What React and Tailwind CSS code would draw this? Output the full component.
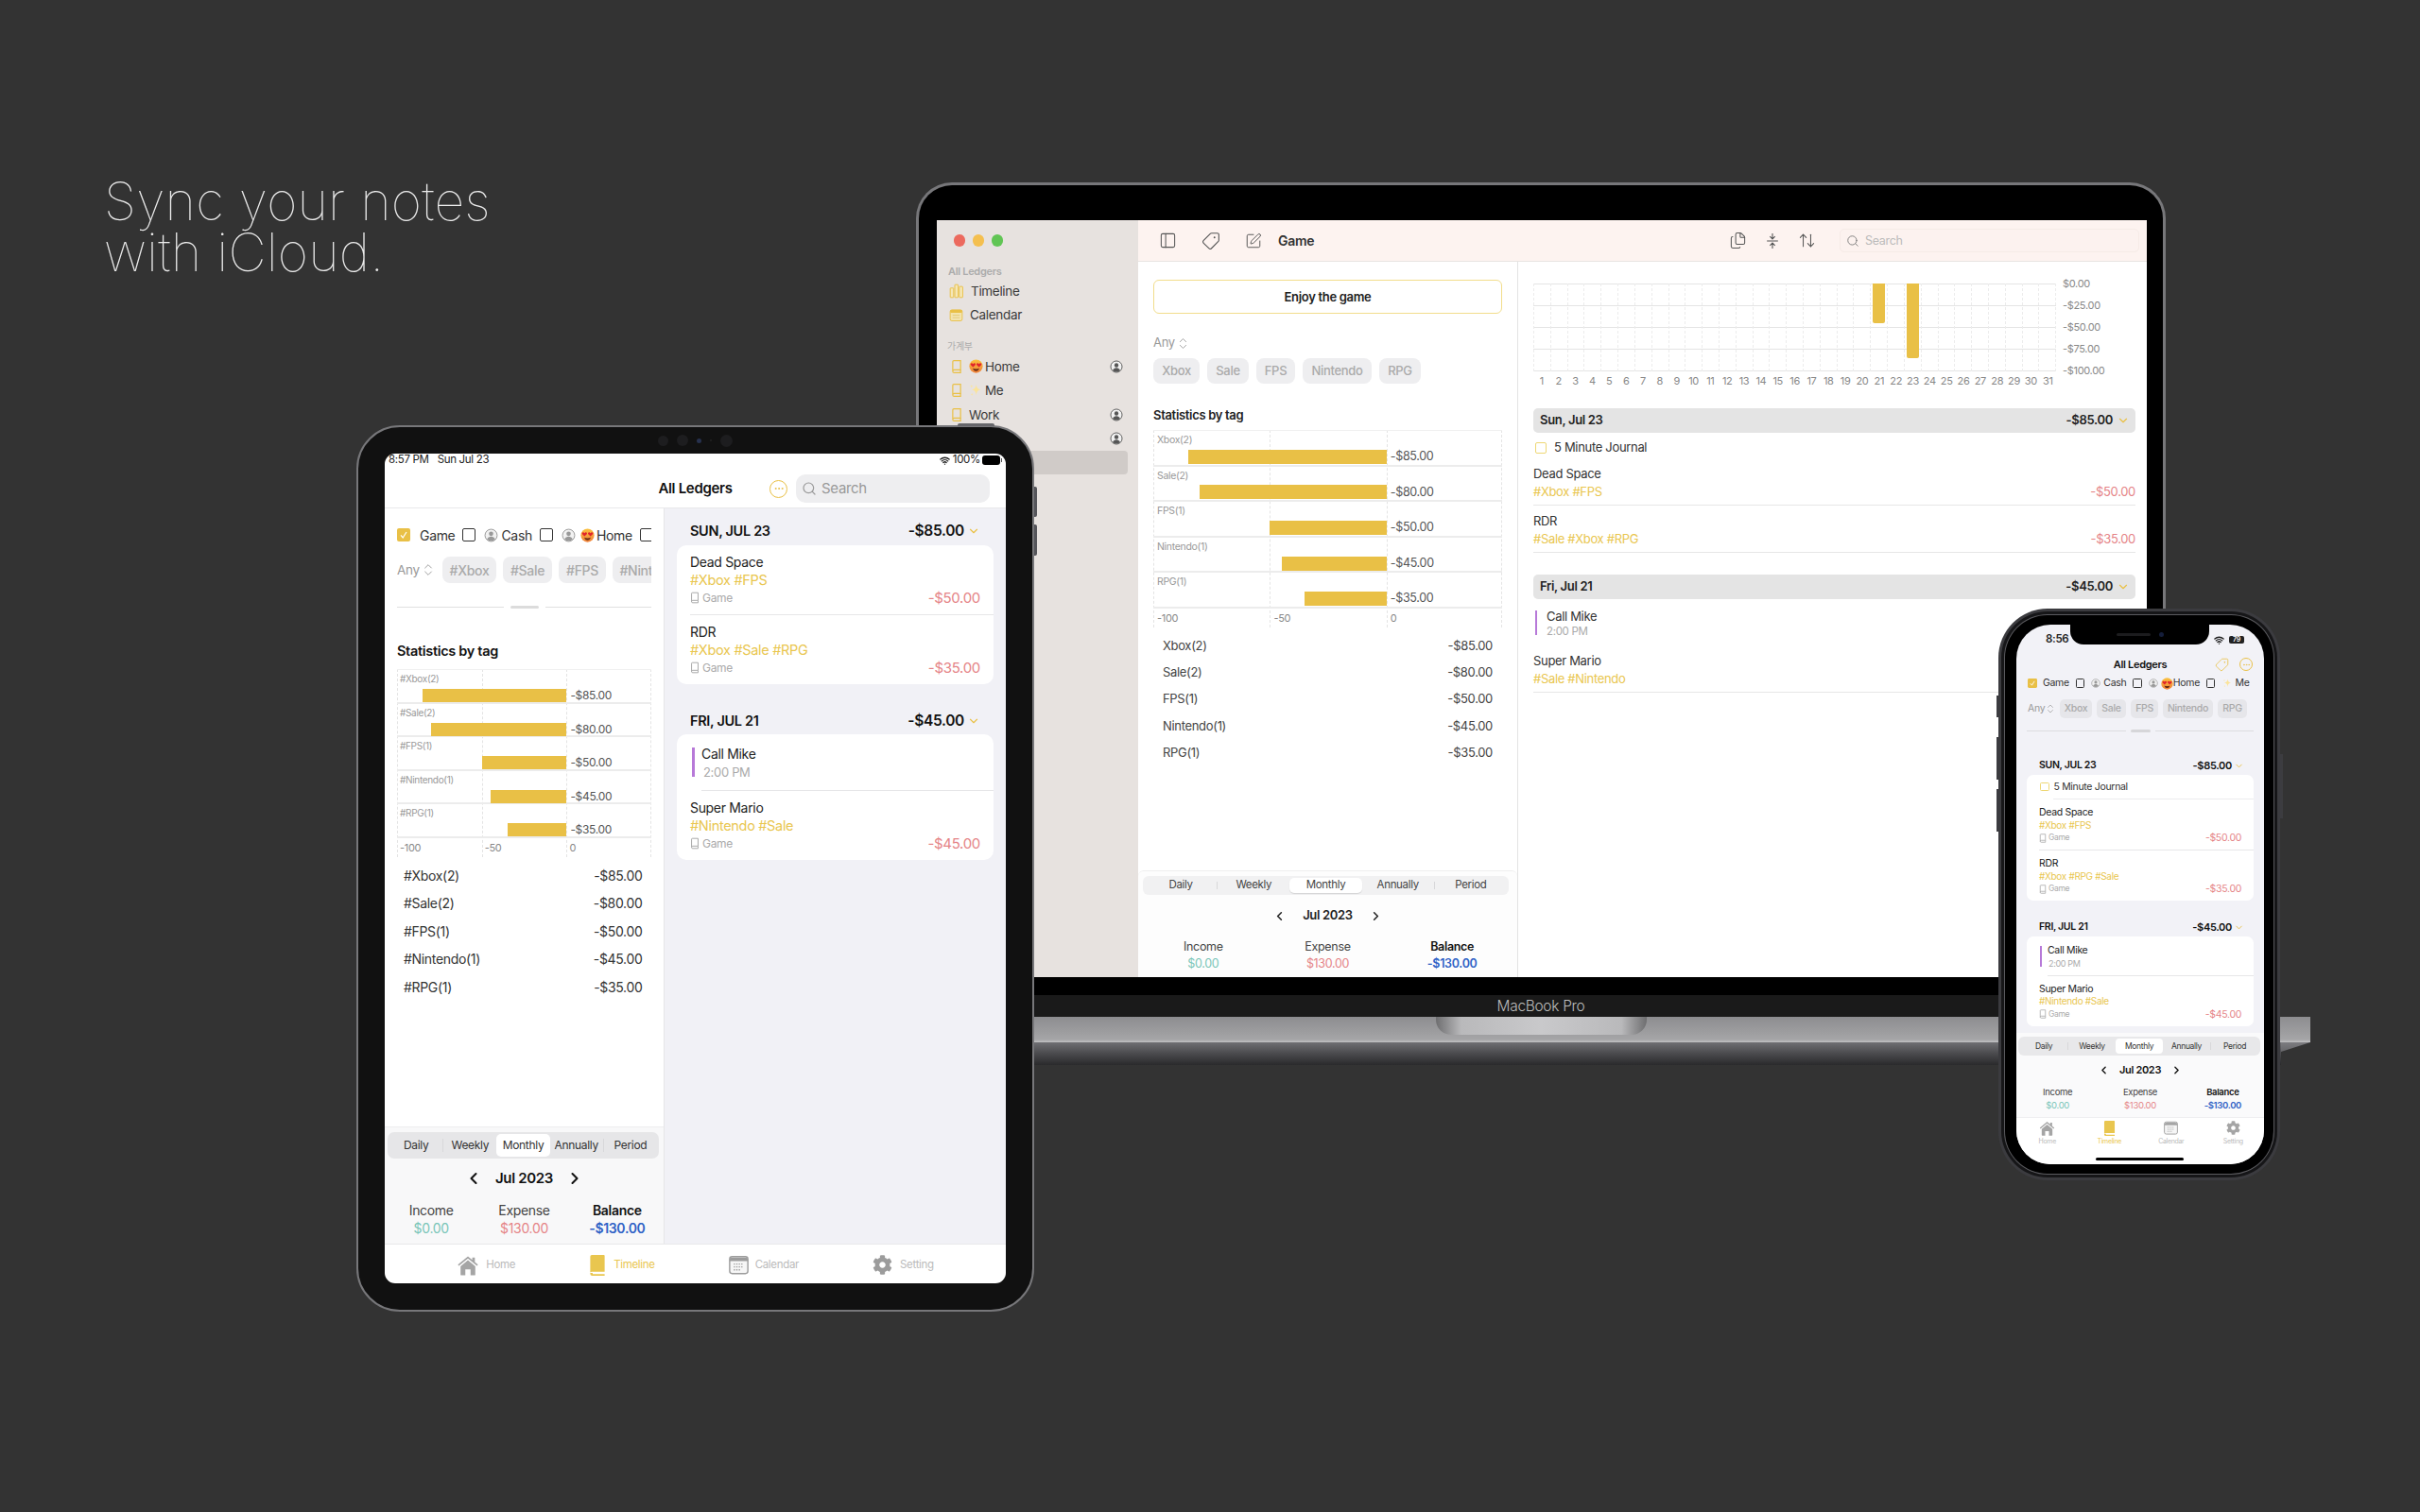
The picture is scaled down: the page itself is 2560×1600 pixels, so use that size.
import React from "react";
import {
  ArrowUpDown,
  ChevronDown,
  ChevronLeft,
  ChevronRight,
  ChevronsUpDown,
  Ellipsis,
  Files,
  PanelLeft,
  Search,
  SquarePen,
  Tag,
  Wifi,
} from "lucide-react";
import { FaCog } from "react-icons/fa";

const TAG_ROWS = [
  { name: "Xbox", count: 2, value: 85 },
  { name: "Sale", count: 2, value: 80 },
  { name: "FPS", count: 1, value: 50 },
  { name: "Nintendo", count: 1, value: 45 },
  { name: "RPG", count: 1, value: 35 },
];
const PERIODS = ["Daily", "Weekly", "Monthly", "Annually", "Period"];

// small drawings ----------------------------------------------------------

const BookIcon = ({ className }) => (
  <svg viewBox="0 0 16 20" fill="none" stroke="currentColor" strokeWidth="1.6" className={className}>
    <path d="M4 1.5h9.5v13H4.5A2 2 0 0 0 2.5 16.5V3A1.5 1.5 0 0 1 4 1.5z" />
    <path d="M2.5 16.5a2 2 0 0 0 2 2h9v-4" />
  </svg>
);

const BooksIcon = ({ className }) => (
  <svg viewBox="0 0 20 20" fill="#f5e7b8" stroke="currentColor" strokeWidth="1.2" className={className}>
    <rect x="1.5" y="6" width="4.5" height="12.5" rx="0.6" />
    <rect x="7.5" y="1.5" width="4.5" height="17" rx="0.6" />
    <rect x="13.5" y="4" width="4.5" height="14.5" rx="0.6" />
  </svg>
);

const SmallCalendar = ({ className }) => (
  <svg viewBox="0 0 20 20" className={className}>
    <rect x="1.5" y="2.5" width="17" height="15.5" rx="2.5" fill="#f3e4ae" stroke="#e9c046" strokeWidth="1.2" />
    <rect x="1.5" y="2.5" width="17" height="4" rx="1.5" fill="#e9c046" />
    <path d="M5 10h10M5 13.5h10" stroke="#e2c878" strokeWidth="1.2" />
  </svg>
);

const FoldArrows = ({ className }) => (
  <svg viewBox="0 0 20 20" fill="none" stroke="currentColor" strokeWidth="1.2" className={className}>
    <path d="M10 1v6.500M7 4.700l3 3 3-3M3.500 10h13M10 19v-6.500M7 15.300l3-3 3 3" />
  </svg>
);

const UserRing = ({ className }) => (
  <svg viewBox="0 0 20 20" className={className}>
    <circle cx="10" cy="10" r="8.6" fill="#f2f2f2" stroke="currentColor" strokeWidth="1.3" />
    <circle cx="10" cy="7.8" r="3.1" fill="currentColor" />
    <path d="M4.4 15.6c1-2.600 3.200-3.800 5.600-3.800s4.600 1.200 5.600 3.800A8 8 0 0 1 10 18a8 8 0 0 1-5.600-2.400z" fill="currentColor" />
  </svg>
);

const HeartEyes = ({ className }) => (
  <svg viewBox="0 0 20 20" className={className}>
    <defs>
      <linearGradient id="heartFace" x1="0" y1="0" x2="0" y2="1">
        <stop offset="0" stopColor="#fbc23e" />
        <stop offset="1" stopColor="#f0813a" />
      </linearGradient>
    </defs>
    <circle cx="10" cy="10" r="9.5" fill="url(#heartFace)" />
    <path d="M5.800 11.400 2.600 8.300C1.400 6.800 3.400 4.700 5 6.200l.8.800.800-.800c1.600-1.500 3.600.6 2.400 2.100z" fill="#e0242c" />
    <path d="M14.200 11.400 11 8.300c-1.200-1.500.8-3.600 2.400-2.100l.8.800.800-.800c1.600-1.500 3.600.6 2.400 2.100z" fill="#e0242c" />
    <path d="M5.500 13c1 .6 2.500 1 4.500 1s3.500-.4 4.500-1c-.6 2.400-2.300 4-4.500 4s-3.900-1.600-4.500-4z" fill="#6b2b12" />
  </svg>
);

const Sparkles = ({ className }) => (
  <svg viewBox="0 0 20 20" fill="#fbe49a" className={className}>
    <path d="M11 1c.6 5 2 7 7 8-5 1-6.400 3-7 9-.6-6-2-8-7-9 5-1 6.400-3 7-8z" />
    <path d="M4 1.500c.2 1.700.8 2.300 2.300 2.500C4.800 4.200 4.200 4.800 4 6.500 3.800 4.800 3.200 4.200 1.700 4 3.200 3.800 3.800 3.200 4 1.500z" />
    <path d="M4.500 14c.2 1.400.7 2 2 2.200-1.300.2-1.800.8-2 2.300-.2-1.500-.7-2.100-2-2.300 1.300-.2 1.800-.8 2-2.200z" />
  </svg>
);

const CheckedBox = ({ className }) => (
  <svg viewBox="0 0 14 14" className={className}>
    <rect width="14" height="14" rx="2" fill="#e9c046" />
    <path d="M4 7.300 6.200 10 10 4" fill="none" stroke="#fff" strokeWidth="1.200" />
  </svg>
);

const TabHome = ({ className }) => (
  <svg viewBox="0 0 24 24" fill="currentColor" className={className}>
    <path d="M12 1.500 17 5.600V3h3v5.100l3.600 3-1.200 1.500L12 4.200 1.600 12.600.4 11.100z" />
    <path d="M3.500 13 12 6.100 20.500 13v9.500a1 1 0 0 1-1 1h-4.500v-7h-6v7H4.500a1 1 0 0 1-1-1z" />
  </svg>
);

const TabBook = ({ className }) => (
  <svg viewBox="0 0 20 26" fill="currentColor" className={className}>
    <path d="M3 0h15a1 1 0 0 1 1 1v20H3.500A2.500 2.500 0 0 0 1 22V2a2 2 0 0 1 2-2z" />
    <path d="M1 23.500A2.500 2.500 0 0 0 3.500 26H19v-2H4v-1.500H1z" />
  </svg>
);

const TabCalendar = ({ className }) => (
  <svg viewBox="0 0 24 24" className={className}>
    <rect x="1" y="2" width="22" height="20.500" rx="3" fill="#f6f6f6" stroke="currentColor" strokeWidth="1.600" />
    <path d="M1 6a3 3 0 0 1 3-3h16a3 3 0 0 1 3 3v1.500H1z" fill="currentColor" />
    <path d="M6 11h12M6 14.500h12M6 18h8" stroke="currentColor" strokeWidth="1.500" strokeDasharray="1.500 1.500" />
  </svg>
);

// shared pieces -----------------------------------------------------------

function TagChart({ prefix = "", scale, rowCls, labelCls, barCls, valueCls, axisCls }) {
  const step = 50 * scale;
  return (
    <div className="relative">
      <div className="absolute inset-0 flex">
        <div className="border-l border-dashed border-[#e4e4e4]" style={{ width: step }} />
        <div className="border-l border-dashed border-[#e4e4e4]" style={{ width: step }} />
        <div className="flex-1 border-x border-dashed border-[#e4e4e4]" />
      </div>
      <div className="relative border-t border-[#f0f0f0]">
        {TAG_ROWS.map((row) => (
          <div key={row.name} className={`${rowCls} border-b-2 border-[#ececec]`}>
            <div className={labelCls}>{`${prefix}${row.name}(${row.count})`}</div>
            <div className="flex items-center">
              <div style={{ width: (100 - row.value) * scale }} />
              <div className={`${barCls} bg-[#e9c046]`} style={{ width: row.value * scale }} />
              <span className={valueCls}>{`-$${row.value}.00`}</span>
            </div>
          </div>
        ))}
        <div className={`${axisCls} flex items-center`}>
          <span style={{ width: step }}>-100</span>
          <span style={{ width: step }}>-50</span>
          <span>0</span>
        </div>
      </div>
    </div>
  );
}

function TagList({ prefix = "", boxCls, rowCls }) {
  return (
    <div className={boxCls}>
      {TAG_ROWS.map((row) => (
        <div key={row.name} className={`${rowCls} flex items-center justify-between`}>
          <span>{`${prefix}${row.name}(${row.count})`}</span>
          <span>{`-$${row.value}.00`}</span>
        </div>
      ))}
    </div>
  );
}

function Segmented({ barCls, itemCls, selCls }) {
  return (
    <div className={`${barCls} flex items-center p-[2px]`}>
      {PERIODS.map((p, i) => (
        <React.Fragment key={p}>
          <div
            className={`flex h-full flex-1 items-center justify-center ${itemCls} ${
              p === "Monthly" ? selCls : ""
            }`}
          >
            {p}
          </div>
          {(i === 0 || i === 3) && <span className="h-[55%] w-px bg-[#d8d8da]" />}
        </React.Fragment>
      ))}
    </div>
  );
}

function Totals({ gridCls, labelCls, valueCls }) {
  return (
    <div className={`grid grid-cols-3 text-center ${gridCls}`}>
      <div>
        <div className={`${labelCls} text-[#444]`}>Income</div>
        <div className={`${valueCls} text-[#79c5b8]`}>$0.00</div>
      </div>
      <div>
        <div className={`${labelCls} text-[#444]`}>Expense</div>
        <div className={`${valueCls} text-[#e58487]`}>$130.00</div>
      </div>
      <div>
        <div className={`${labelCls} font-semibold text-[#111]`}>Balance</div>
        <div className={`${valueCls} font-semibold text-[#2f62c6]`}>-$130.00</div>
      </div>
    </div>
  );
}

function Entry({ t, title, tags, amount, last }) {
  return (
    <div className={`${t.entryRoot} ${last ? "" : "border-b border-[#e6e6e8]"}`}>
      <div className={`${t.title} text-[#222]`}>{title}</div>
      <div className={`${t.tags} text-[#e9c64f]`}>{tags}</div>
      <div className="flex items-center justify-between">
        <div className="flex items-center text-[#aaa]">
          <BookIcon className={t.bookIcon} />
          <span className={t.meta}>Game</span>
        </div>
        <span className={`${t.amount} text-[#e58487]`}>{amount}</span>
      </div>
    </div>
  );
}

function DayHeader({ t, date, total }) {
  return (
    <div className={`${t.dayHead} flex items-center justify-between`}>
      <span className={`${t.date} font-semibold text-[#111]`}>{date}</span>
      <span className="flex items-center">
        <span className={`${t.total} font-semibold text-[#111]`}>{total}</span>
        <ChevronDown className={`${t.chev} text-[#e9c046]`} strokeWidth={2} />
      </span>
    </div>
  );
}

function FridayCard({ t }) {
  return (
    <div className={`${t.card} bg-white`}>
      <div className={t.callRoot}>
        <div className={`${t.callBar} bg-[#b779d8]`} />
        <div className={`${t.callBody} flex-1 border-b border-[#e6e6e8]`}>
          <div className={`${t.title} text-[#222]`}>Call Mike</div>
          <div className={`${t.time} text-[#aaa]`}>2:00 PM</div>
        </div>
      </div>
      <Entry t={t} title="Super Mario" tags="#Nintendo #Sale" amount="-$45.00" last />
    </div>
  );
}

// macbook ------------------------------------------------------------------

function SidebarRow({ children, right, selected }) {
  return (
    <div
      className={`mr-[11px] flex h-[25.4px] items-center rounded-[4px] pr-[5px] pl-[15px] text-[13.5px] text-[#3a3a3a] ${
        selected ? "bg-[#d0cbc8]" : ""
      }`}
    >
      {children}
      {right && <UserRing className="ml-auto h-[14px] w-[14px] text-[#555]" />}
    </div>
  );
}

function MacSidebar() {
  const book = <BookIcon className="mr-[7px] h-[16px] w-[12px] text-[#e9c046]" />;
  return (
    <div className="flex w-[213px] shrink-0 flex-col bg-[#e7e2df] pt-[15px]">
      <div className="flex gap-[7.5px] pl-[17.5px]">
        <span className="h-[12.5px] w-[12.5px] rounded-full bg-[#ec6a5e]" />
        <span className="h-[12.5px] w-[12.5px] rounded-full bg-[#f4bf4f]" />
        <span className="h-[12.5px] w-[12.5px] rounded-full bg-[#61c554]" />
      </div>
      <div className="mt-[19px] pl-[12px] text-[11px] leading-[14px] font-semibold text-[#acacac]">All Ledgers</div>
      <div className="mt-[2px]">
        <SidebarRow>
          <BooksIcon className="mr-[7px] ml-[-2px] h-[16px] w-[16px] text-[#e9c046]" />
          Timeline
        </SidebarRow>
        <SidebarRow>
          <SmallCalendar className="mr-[7px] ml-[-2px] h-[15px] w-[15px]" />
          Calendar
        </SidebarRow>
      </div>
      <div className="mt-[13px] pl-[11px] text-[10px] leading-[14px] text-[#acacac]">가계부</div>
      <div className="mt-[2px]">
        <SidebarRow right>
          {book}
          <HeartEyes className="mr-[2px] h-[15px] w-[15px]" />
          Home
        </SidebarRow>
        <SidebarRow>
          {book}
          <Sparkles className="mr-[3px] h-[14px] w-[14px]" />
          Me
        </SidebarRow>
        <SidebarRow right>
          {book}
          Work
        </SidebarRow>
        <SidebarRow right />
        <SidebarRow selected />
      </div>
    </div>
  );
}

function MacMiddle() {
  return (
    <div className="flex w-[402px] shrink-0 flex-col border-r border-[#e3e3e3]">
      <div className="px-[16px] pt-[19px]">
        <div className="flex h-[36px] items-center justify-center rounded-[6px] border border-[#f2dd8b] pt-[1px] text-[13px] font-semibold text-[#222]">
          Enjoy the game
        </div>
        <div className="mt-[23px] flex h-[16px] items-center text-[13px] text-[#999]">
          Any
          <ChevronsUpDown className="ml-[1px] h-[15px] w-[15px]" strokeWidth={1.4} />
        </div>
        <div className="mt-[8px] flex gap-[8px]">
          <span className="flex h-[27px] w-[49px] items-center justify-center rounded-[8px] bg-[#eeeef0] text-[13px] font-medium text-[#aaa]">Xbox</span>
          <span className="flex h-[27px] w-[44px] items-center justify-center rounded-[8px] bg-[#eeeef0] text-[13px] font-medium text-[#aaa]">Sale</span>
          <span className="flex h-[27px] w-[41px] items-center justify-center rounded-[8px] bg-[#eeeef0] text-[13px] font-medium text-[#aaa]">FPS</span>
          <span className="flex h-[27px] w-[73px] items-center justify-center rounded-[8px] bg-[#eeeef0] text-[13px] font-medium text-[#aaa]">Nintendo</span>
          <span className="flex h-[27px] w-[44px] items-center justify-center rounded-[8px] bg-[#eeeef0] text-[13px] font-medium text-[#aaa]">RPG</span>
        </div>
        <div className="mt-[25px] text-[13px] leading-[16px] font-semibold text-[#222]">Statistics by tag</div>
        <div className="mt-[8px]">
          <TagChart
            scale={2.468}
            rowCls="h-[37.6px] pt-[3px]"
            labelCls="mb-[1px] pl-[4px] text-[10.5px] leading-[14px] text-[#999]"
            barCls="h-[15px]"
            valueCls="ml-[4px] text-[12.5px] text-[#555]"
            axisCls="h-[20px] pl-[4px] text-[11px] text-[#888]"
          />
        </div>
        <TagList boxCls="mt-[5.5px] pr-[10px] pl-[10px]" rowCls="h-[28.25px] text-[13px] text-[#444]" />
      </div>
      <div className="mt-auto h-[113px] rounded-t-[6px] border-t border-[#eee] bg-[#fdfdfd] pt-[5px]">
        <div className="mr-[9px] ml-[5px]">
          <Segmented
            barCls="h-[20px] rounded-[6px] bg-[#f1f1f2]"
            itemCls="text-[11.5px] text-[#444]"
            selCls="rounded-[5px] bg-white shadow-[0_1px_1px_rgba(0,0,0,0.12)]"
          />
        </div>
        <div className="mt-[12px] flex h-[20px] items-center justify-center">
          <ChevronLeft className="h-[15px] w-[15px] text-[#222]" strokeWidth={2.5} />
          <span className="mx-[17px] text-[13px] font-semibold text-[#222]">Jul 2023</span>
          <ChevronRight className="h-[15px] w-[15px] text-[#222]" strokeWidth={2.5} />
        </div>
        <div className="mt-[15px]">
          <Totals gridCls="px-[3px]" labelCls="text-[12.5px] leading-[16px]" valueCls="mt-[2px] text-[12.5px] leading-[16px]" />
        </div>
      </div>
    </div>
  );
}

function MacDayChart() {
  const days = Array.from({ length: 31 }, (_, i) => i + 1);
  const heights = { 21: 42, 23: 79 };
  const yLabels = ["$0.00", "-$25.00", "-$50.00", "-$75.00", "-$100.00"];
  return (
    <div className="flex">
      <div className="w-[553px] shrink-0">
        <div className="relative h-[93px]">
          <div className="absolute inset-0 flex flex-col justify-between">
            {yLabels.map((l) => (
              <div key={l} className="h-px bg-[#e4e4e4]" />
            ))}
          </div>
          <div className="relative flex h-full">
            {days.map((d) => (
              <div key={d} className="flex flex-1 justify-center border-r border-dashed border-[#ececec] first:border-l">
                {heights[d] && <div className="w-[13px] rounded-b-[2px] bg-[#e9c046]" style={{ height: heights[d] }} />}
              </div>
            ))}
          </div>
        </div>
        <div className="mt-[3px] flex text-[11px] leading-[14px] text-[#888]">
          {days.map((d) => (
            <span key={d} className="flex-1 text-center">
              {d}
            </span>
          ))}
        </div>
      </div>
      <div className="-mt-[4px] ml-[7px] flex h-[101px] flex-col justify-between text-[11px] leading-[9px] text-[#888]">
        {yLabels.map((l) => (
          <span key={l}>{l}</span>
        ))}
      </div>
    </div>
  );
}

function MacDayBar({ date, total }) {
  return (
    <div className="flex h-[26px] items-center justify-between rounded-[5px] bg-[#e4e4e4] pr-[6px] pl-[7px]">
      <span className="text-[13px] font-semibold text-[#222]">{date}</span>
      <span className="flex items-center">
        <span className="text-[13px] font-semibold text-[#222]">{total}</span>
        <ChevronDown className="ml-[4px] h-[14px] w-[14px] text-[#e9c046]" />
      </span>
    </div>
  );
}

function MacEntry({ title, tags, amount, topCls }) {
  return (
    <div className={`${topCls} border-b border-[#e6e6e6] pb-[5px]`}>
      <div className="text-[13px] leading-[18px] text-[#333]">{title}</div>
      <div className="mt-[1px] flex justify-between text-[13px] leading-[18px]">
        <span className="text-[#e9c64f]">{tags}</span>
        {amount && <span className="text-[#e58487]">{amount}</span>}
      </div>
    </div>
  );
}

function MacRight() {
  return (
    <div className="flex-1 pt-[23px] pr-[12px] pl-[16px]">
      <MacDayChart />
      <div className="mt-[22px]">
        <MacDayBar date="Sun, Jul 23" total="-$85.00" />
      </div>
      <div className="mt-[8px] flex h-[16px] items-center pl-[2px] text-[13px] text-[#333]">
        <span className="mr-[8px] h-[12px] w-[12px] rounded-[2px] border border-[#eed774]" />5 Minute Journal
      </div>
      <MacEntry title="Dead Space" tags="#Xbox #FPS" amount="-$50.00" topCls="mt-[10px]" />
      <MacEntry title="RDR" tags="#Sale #Xbox #RPG" amount="-$35.00" topCls="pt-[7px]" />
      <div className="mt-[23px]">
        <MacDayBar date="Fri, Jul 21" total="-$45.00" />
      </div>
      <div className="mt-[10px] flex">
        <div className="mt-[2px] ml-[2px] h-[26px] w-[2px] bg-[#b779d8]" />
        <div className="ml-[10px]">
          <div className="text-[13px] leading-[16px] text-[#333]">Call Mike</div>
          <div className="text-[11.5px] leading-[16px] text-[#aaa]">2:00 PM</div>
        </div>
      </div>
      <MacEntry title="Super Mario" tags="#Sale #Nintendo" topCls="mt-[14px]" />
    </div>
  );
}

function MacBook() {
  return (
    <div className="absolute top-[193px] left-[816px] w-[1628px]">
      <div className="mx-auto h-[860px] w-[1322px] overflow-hidden rounded-t-[38px] border-x-[3px] border-t-[3px] border-[#77777a] bg-black pt-[37px] pr-[17px] pl-[19px]">
        <div className="flex h-[801px] w-[1280px] bg-white">
          <MacSidebar />
          <div className="flex flex-1 flex-col">
            <div className="flex h-[44px] shrink-0 items-center border-b border-[#e8e4e2] bg-[#fdf3f0] pr-[8px] pl-[22px] text-[#555]">
              <PanelLeft className="h-[19px] w-[19px]" strokeWidth={1.3} />
              <Tag className="ml-[26px] h-[20px] w-[20px] rotate-90" strokeWidth={1.3} />
              <SquarePen className="ml-[26px] h-[18px] w-[18px]" strokeWidth={1.3} />
              <span className="mb-[1px] ml-[17px] text-[14px] font-semibold text-[#333]">Game</span>
              <Files className="ml-auto h-[19px] w-[19px]" strokeWidth={1.3} />
              <FoldArrows className="ml-[18px] h-[18px] w-[18px]" />
              <ArrowUpDown className="ml-[18px] h-[19px] w-[19px]" strokeWidth={1.3} />
              <div className="ml-[25px] flex h-[25px] w-[317px] items-center rounded-[5px] border border-[#f6ebe7] bg-[#fcf2ef] pt-[1px] pl-[6px] text-[12.5px] text-[#bbb]">
                <Search className="mr-[6px] h-[14px] w-[14px] text-[#777]" strokeWidth={1.5} />
                Search
              </div>
            </div>
            <div className="flex min-h-0 flex-1">
              <MacMiddle />
              <MacRight />
            </div>
          </div>
        </div>
      </div>
      <div className="relative mx-auto flex h-[23px] w-[1322px] items-center justify-center bg-[#1a1a1a] text-[15.5px] font-light text-[#bdbdbd]">
        MacBook Pro
      </div>
      <div className="relative h-[27px] bg-[linear-gradient(180deg,#8d8d90_0%,#9d9d9f_60%,#a6a6a8_90%,#c4c4c6_100%)]">
        <div className="absolute top-0 left-[703px] h-[19px] w-[223px] rounded-b-[16px] bg-[linear-gradient(90deg,#6e6e70_0%,#b9b9bb_12%,#c9c9cb_50%,#b9b9bb_88%,#6e6e70_100%)]" />
      </div>
      <div className="flex h-[24px]">
        <div className="flex-1 bg-[linear-gradient(180deg,#6f6f73_0%,#4a4a4d_50%,#2a2a2c_100%)]" />
        <div className="h-[10px] w-[31px] bg-[linear-gradient(180deg,#7c7c80,#666669)] [clip-path:polygon(0_0,100%_0,0_100%)]" />
      </div>
    </div>
  );
}

// ipad ---------------------------------------------------------------------

const ipadType = {
  dayHead: "h-[20px] pr-[14px] pl-[14px]",
  date: "text-[14.5px]",
  total: "text-[15.5px]",
  chev: "ml-[3px] h-[14px] w-[14px]",
  card: "rounded-[10px]",
  entryRoot: "ml-[14px] pt-[7.5px] pr-[14px] pb-[7.5px]",
  title: "text-[14px] leading-[19px]",
  tags: "text-[14.5px] leading-[19px]",
  bookIcon: "mr-[3px] h-[13px] w-[10px]",
  meta: "text-[12px] leading-[20px]",
  amount: "text-[15px] leading-[20px]",
  callRoot: "flex pl-[16px]",
  callBar: "mt-[14px] h-[31px] w-[2.5px]",
  callBody: "ml-[7.5px] pt-[11px] pb-[9px]",
  time: "pl-[2px] text-[13px] leading-[20px]",
};

const ipadCheckbox = <span className="h-[14px] w-[14px] shrink-0 rounded-[2px] border-[1.5px] border-[#333]" />;

function IpadLeft() {
  return (
    <div className="flex w-[296px] shrink-0 flex-col border-r border-[#e6e6e8]">
      <div className="px-[13px] pt-[20px]">
        <div className="flex h-[16px] items-center overflow-hidden text-[14px] whitespace-nowrap text-[#333]">
          <CheckedBox className="h-[14px] w-[14px] shrink-0" />
          <span className="mr-[8px] ml-[10px]">Game</span>
          {ipadCheckbox}
          <UserRing className="mr-[3px] ml-[9px] h-[15px] w-[15px] shrink-0 text-[#999]" />
          <span className="mr-[8px]">Cash</span>
          {ipadCheckbox}
          <UserRing className="ml-[9px] h-[15px] w-[15px] shrink-0 text-[#999]" />
          <HeartEyes className="mr-[2px] ml-[5px] h-[15px] w-[15px] shrink-0" />
          <span className="mr-[8px]">Home</span>
          {ipadCheckbox}
        </div>
        <div className="mt-[15px] flex items-center overflow-hidden whitespace-nowrap">
          <span className="flex w-[48px] shrink-0 items-center text-[13.5px] text-[#999]">
            Any
            <ChevronsUpDown className="ml-[1px] h-[16px] w-[16px]" strokeWidth={1.4} />
          </span>
          <span className="flex h-[28px] w-[57px] shrink-0 items-center justify-center rounded-[8px] bg-[#eeeef0] text-[14px] font-medium text-[#aaa]">#Xbox</span>
          <span className="ml-[7px] flex h-[28px] w-[52px] shrink-0 items-center justify-center rounded-[8px] bg-[#eeeef0] text-[14px] font-medium text-[#aaa]">#Sale</span>
          <span className="ml-[7px] flex h-[28px] w-[50px] shrink-0 items-center justify-center rounded-[8px] bg-[#eeeef0] text-[14px] font-medium text-[#aaa]">#FPS</span>
          <span className="ml-[7px] flex h-[28px] w-[82px] shrink-0 items-center justify-center rounded-[8px] bg-[#eeeef0] text-[14px] font-medium text-[#aaa]">#Nintendo</span>
        </div>
        <div className="mt-[24px] flex h-[3px] items-center gap-[7px]">
          <span className="h-[1px] flex-1 bg-[#e0e0e0]" />
          <span className="h-[3px] w-[30px] rounded-full bg-[#dcdcdc]" />
          <span className="h-[1px] flex-1 bg-[#e0e0e0]" />
        </div>
        <div className="mt-[36px] text-[14.5px] leading-[18px] font-semibold text-[#111]">Statistics by tag</div>
        <div className="mt-[10px]">
          <TagChart
            prefix="#"
            scale={1.794}
            rowCls="h-[35.6px] pt-[3px]"
            labelCls="mb-[2px] pl-[3px] text-[10px] leading-[13px] text-[#999]"
            barCls="h-[14px]"
            valueCls="ml-[4px] text-[12px] text-[#555]"
            axisCls="h-[20px] pl-[3px] text-[11px] text-[#888]"
          />
        </div>
        <TagList prefix="#" boxCls="mt-[4.5px] pr-[9.5px] pl-[7px]" rowCls="h-[29.5px] text-[14px] text-[#333]" />
      </div>
      <div className="mt-auto h-[124px] border-t border-[#eeeeef] bg-[#f8f8f9] pt-[5px]">
        <div className="mr-[5px] ml-[3px]">
          <Segmented
            barCls="h-[28px] rounded-[7px] bg-[#e6e6e8]"
            itemCls="text-[12px] text-[#333]"
            selCls="rounded-[5px] bg-white"
          />
        </div>
        <div className="mt-[10px] flex h-[22px] items-center justify-center">
          <ChevronLeft className="h-[20px] w-[20px] text-[#111]" strokeWidth={2.5} />
          <span className="mx-[13px] text-[15px] font-semibold text-[#111]">Jul 2023</span>
          <ChevronRight className="h-[20px] w-[20px] text-[#111]" strokeWidth={2.5} />
        </div>
        <div className="mt-[14px]">
          <Totals gridCls="" labelCls="text-[14px] leading-[18px]" valueCls="mt-[1px] text-[14px] leading-[18px]" />
        </div>
      </div>
    </div>
  );
}

function IpadRight() {
  const t = ipadType;
  return (
    <div className="flex-1 bg-[#f1f1f6] px-[13px] pt-[14px]">
      <DayHeader t={t} date="SUN, JUL 23" total="-$85.00" />
      <div className={`${t.card} mt-[5px] bg-white`}>
        <Entry t={t} title="Dead Space" tags="#Xbox #FPS" amount="-$50.00" />
        <Entry t={t} title="RDR" tags="#Xbox #Sale #RPG" amount="-$35.00" last />
      </div>
      <div className="mt-[29px]">
        <DayHeader t={t} date="FRI, JUL 21" total="-$45.00" />
      </div>
      <div className="mt-[4px]">
        <FridayCard t={t} />
      </div>
    </div>
  );
}

function Ipad() {
  return (
    <div className="absolute top-[450px] left-[377px] h-[938px] w-[717px]">
      <span className="absolute -top-[2px] left-[636px] h-[3px] w-[39px] rounded-t-[2px] bg-[#66666a]" />
      <span className="absolute top-[65px] -right-[3px] h-[32px] w-[3px] rounded-r-[2px] bg-[#55555a]" />
      <span className="absolute top-[105px] -right-[3px] h-[33px] w-[3px] rounded-r-[2px] bg-[#55555a]" />
      <div className="h-full rounded-[46px] border-[2px] border-[#77777a] bg-[#111] p-[28px]">
        <div className="mx-auto -mt-[21px] mb-[7px] flex h-[14px] w-[110px] items-center justify-center gap-[9px]">
          <span className="h-[11px] w-[11px] rounded-full bg-[#1d1d1f]" />
          <span className="h-[12px] w-[12px] rounded-full bg-[#1d1d1f]" />
          <span className="h-[5px] w-[5px] rounded-full bg-[#27314e]" />
          <span className="h-[2px] w-[2px] rounded-full bg-[#222]" />
          <span className="h-[13px] w-[13px] rounded-full bg-[#1d1d1f]" />
        </div>
        <div className="flex h-[878px] w-[657px] flex-col overflow-hidden rounded-[11px] bg-white">
          <div className="flex h-[14px] shrink-0 items-center pr-[4px] pl-[4px] text-[11.5px] text-[#222]">
            <span>8:57 PM</span>
            <span className="ml-[9px]">Sun Jul 23</span>
            <Wifi className="mr-[3px] ml-auto h-[11px] w-[11px]" strokeWidth={3} />
            <span>100%</span>
            <span className="ml-[2px] h-[10px] w-[19px] rounded-[3px] bg-black" />
            <span className="ml-[1px] h-[4px] w-[1px] bg-[#555]" />
          </div>
          <div className="grid h-[44px] shrink-0 grid-cols-[1fr_auto_1fr] items-center border-b border-[#e8e8ea] pt-[3px]">
            <div />
            <div className="text-[15px] font-semibold text-[#111]">All Ledgers</div>
            <div className="flex items-center justify-end gap-[9px] pr-[17px]">
              <span className="flex h-[19px] w-[19px] items-center justify-center rounded-full border-[1.3px] border-[#e9c046] text-[#e9c046]">
                <Ellipsis className="h-[12px] w-[12px]" strokeWidth={2} />
              </span>
              <div className="flex h-[30px] w-[205px] items-center rounded-[10px] bg-[#eeeef0] pl-[6px] text-[15px] text-[#999]">
                <Search className="mr-[5px] h-[16px] w-[16px]" strokeWidth={1.8} />
                Search
              </div>
            </div>
          </div>
          <div className="flex min-h-0 flex-1">
            <IpadLeft />
            <IpadRight />
          </div>
          <div className="flex h-[42px] shrink-0 items-center justify-center gap-[78px] border-t border-[#e8e8ea] pt-[2px] text-[11.5px] text-[#bbb]">
            <div className="flex items-center text-[#a5a5a5]">
              <TabHome className="mr-[7px] h-[22px] w-[24px]" />
              <span className="text-[#bbb]">Home</span>
            </div>
            <div className="flex items-center text-[#e9c64f]">
              <TabBook className="mr-[8px] h-[22px] w-[18px]" />
              Timeline
            </div>
            <div className="flex items-center text-[#9c9c9c]">
              <TabCalendar className="mr-[7px] h-[21px] w-[21px]" />
              <span className="text-[#bbb]">Calendar</span>
            </div>
            <div className="flex items-center text-[#9c9c9c]">
              <FaCog className="mr-[8px] h-[21px] w-[21px]" />
              <span className="text-[#bbb]">Setting</span>
            </div>
          </div>
        </div>
      </div>
    </div>
  );
}

// iphone -------------------------------------------------------------------

const phoneType = {
  dayHead: "h-[16px] pr-[10px] pl-[13px]",
  date: "text-[10.5px]",
  total: "text-[11px]",
  chev: "ml-[2px] h-[11px] w-[11px]",
  card: "rounded-[7px]",
  entryRoot: "ml-[13px] pt-[7px] pr-[13px] pb-[5.5px]",
  title: "text-[10.5px] leading-[13.5px]",
  tags: "text-[10px] leading-[13.5px]",
  bookIcon: "mr-[2px] h-[10px] w-[8px]",
  meta: "text-[8.5px] leading-[13.5px]",
  amount: "text-[10.5px] leading-[13.5px]",
  callRoot: "flex pl-[14px]",
  callBar: "mt-[10px] h-[22px] w-[2px]",
  callBody: "ml-[6px] pt-[8px] pb-[6px]",
  time: "pl-[1px] text-[9px] leading-[13px]",
};

const phoneCheckbox = <span className="h-[9.5px] w-[9.5px] shrink-0 rounded-[1.5px] border border-[#333]" />;

function IPhone() {
  const t = phoneType;
  return (
    <div className="absolute top-[644px] left-[2114px] h-[605px] w-[298px]">
      <span className="absolute top-[92px] -left-[2px] h-[23px] w-[2px] bg-[#3c3c40]" />
      <span className="absolute top-[136px] -left-[2px] h-[45px] w-[2px] bg-[#3c3c40]" />
      <span className="absolute top-[191px] -left-[2px] h-[45px] w-[2px] bg-[#3c3c40]" />
      <span className="absolute top-[154px] -right-[3px] h-[68px] w-[3px] bg-[#3c3c40]" />
      <div className="h-full rounded-[52px] bg-[#3b3b3f] p-[3px]">
        <div className="h-full rounded-[49px] bg-[#161618] p-[3px]">
          <div className="h-full rounded-[46px] bg-[#5a5a5e] p-[1px]">
            <div className="h-full rounded-[45px] bg-black pt-[10px] pl-[12px]">
              <div className="relative flex h-[571px] w-[262px] flex-col overflow-hidden rounded-[36px] bg-[#f2f2f7]">
                <div className="absolute top-0 left-[57px] flex h-[21px] w-[147px] items-center justify-center gap-[9px] rounded-b-[14px] bg-black">
                  <span className="h-[3px] w-[36px] rounded-full bg-[#1c1c1e]" />
                  <span className="h-[5px] w-[5px] rounded-full bg-[#141d3a]" />
                </div>
                <div className="flex h-[32px] shrink-0 items-center pr-[21px] pl-[31px]">
                  <span className="text-[11.5px] font-semibold text-[#222]">8:56</span>
                  <Wifi className="mr-[5px] ml-auto h-[11px] w-[11px] text-[#222]" strokeWidth={3} />
                  <span className="flex h-[8px] w-[16px] items-center justify-center rounded-[2px] bg-[#222] text-[7px] font-semibold text-white">79</span>
                </div>
                <div className="grid h-[20px] shrink-0 grid-cols-[1fr_auto_1fr] items-center">
                  <div />
                  <div className="text-[11px] font-semibold text-[#111]">All Ledgers</div>
                  <div className="flex items-center justify-end gap-[11px] pr-[12px] text-[#e9c046]">
                    <Tag className="h-[15px] w-[15px] rotate-90" strokeWidth={1.3} />
                    <span className="flex h-[14px] w-[14px] items-center justify-center rounded-full border border-[#e9c046]">
                      <Ellipsis className="h-[9px] w-[9px]" strokeWidth={2} />
                    </span>
                  </div>
                </div>
                <div className="mx-[12px] mt-[3px] flex h-[14px] shrink-0 items-center overflow-hidden text-[10.5px] whitespace-nowrap text-[#333]">
                  <CheckedBox className="h-[10px] w-[10px] shrink-0" />
                  <span className="mr-[7px] ml-[6px]">Game</span>
                  {phoneCheckbox}
                  <UserRing className="mr-[3px] ml-[7px] h-[10px] w-[10px] shrink-0 text-[#999]" />
                  <span className="mr-[7px]">Cash</span>
                  {phoneCheckbox}
                  <UserRing className="ml-[7px] h-[10px] w-[10px] shrink-0 text-[#999]" />
                  <HeartEyes className="ml-[3px] h-[13px] w-[13px] shrink-0" />
                  <span className="mr-[7px]">Home</span>
                  {phoneCheckbox}
                  <Sparkles className="mr-[3px] ml-[8px] h-[10px] w-[10px] shrink-0" />
                  <span className="mr-[6px]">Me</span>
                  <span className="h-[9px] w-[1px] shrink-0 bg-[#333]" />
                </div>
                <div className="mx-[12px] mt-[10px] flex shrink-0 items-center text-[10.5px] whitespace-nowrap">
                  <span className="flex w-[34px] shrink-0 items-center text-[#999]">
                    Any
                    <ChevronsUpDown className="h-[12px] w-[12px]" strokeWidth={1.4} />
                  </span>
                  <span className="flex h-[20px] w-[34px] items-center justify-center rounded-[5px] bg-[#e6e6ea] font-medium text-[#aaa]">Xbox</span>
                  <span className="ml-[5px] flex h-[20px] w-[31px] items-center justify-center rounded-[5px] bg-[#e6e6ea] font-medium text-[#aaa]">Sale</span>
                  <span className="ml-[5px] flex h-[20px] w-[29px] items-center justify-center rounded-[5px] bg-[#e6e6ea] font-medium text-[#aaa]">FPS</span>
                  <span className="ml-[5px] flex h-[20px] w-[53px] items-center justify-center rounded-[5px] bg-[#e6e6ea] font-medium text-[#aaa]">Nintendo</span>
                  <span className="ml-[5px] flex h-[20px] w-[31px] items-center justify-center rounded-[5px] bg-[#e6e6ea] font-medium text-[#aaa]">RPG</span>
                </div>
                <div className="mx-[11px] mt-[12px] flex h-[3px] shrink-0 items-center gap-[5px]">
                  <span className="h-px flex-1 bg-[#dcdcdf]" />
                  <span className="h-[3px] w-[21px] rounded-full bg-[#d6d6d9]" />
                  <span className="h-px flex-1 bg-[#dcdcdf]" />
                </div>
                <div className="mx-[11px] mt-[27px] shrink-0">
                  <DayHeader t={t} date="SUN, JUL 23" total="-$85.00" />
                  <div className={`${t.card} mt-[2px] bg-white`}>
                    <div className="flex h-[25px] items-center pl-[14px] text-[10.5px] text-[#333]">
                      <span className="mr-[5px] h-[9.5px] w-[9.5px] rounded-[1.5px] border border-[#eed774]" />5 Minute Journal
                    </div>
                    <div className="ml-[28px] h-px bg-[#ececee]" />
                    <Entry t={t} title="Dead Space" tags="#Xbox #FPS" amount="-$50.00" />
                    <Entry t={t} title="RDR" tags="#Xbox #RPG #Sale" amount="-$35.00" last />
                  </div>
                  <div className="mt-[20px]">
                    <DayHeader t={t} date="FRI, JUL 21" total="-$45.00" />
                  </div>
                  <div className="mt-[2px]">
                    <FridayCard t={t} />
                  </div>
                </div>
                <div className="mt-auto h-[89px] shrink-0 bg-[#fafafb] pt-[4px]">
                  <div className="mr-[4px] ml-[2px]">
                    <Segmented
                      barCls="h-[20px] rounded-[6px] bg-[#e8e8ea]"
                      itemCls="text-[8.5px] text-[#333]"
                      selCls="rounded-[4px] bg-white"
                    />
                  </div>
                  <div className="mt-[7px] flex h-[16px] items-center justify-center">
                    <ChevronLeft className="h-[13px] w-[13px] text-[#111]" strokeWidth={2.5} />
                    <span className="mx-[10px] text-[11px] font-semibold text-[#111]">Jul 2023</span>
                    <ChevronRight className="h-[13px] w-[13px] text-[#111]" strokeWidth={2.5} />
                  </div>
                  <div className="mt-[9px]">
                    <Totals gridCls="" labelCls="text-[9.5px] leading-[14px]" valueCls="text-[9.5px] leading-[14px]" />
                  </div>
                </div>
                <div className="relative grid h-[50px] shrink-0 grid-cols-4 border-t border-[#eeeef0] bg-white pt-[3px] text-center text-[7px] text-[#bbb]">
                  <div className="flex flex-col items-center text-[#a5a5a5]">
                    <TabHome className="h-[16px] w-[17px]" />
                    <span className="mt-[1px] text-[#bbb]">Home</span>
                  </div>
                  <div className="flex flex-col items-center text-[#e9c64f]">
                    <TabBook className="h-[16px] w-[13px]" />
                    <span className="mt-[1px]">Timeline</span>
                  </div>
                  <div className="flex flex-col items-center text-[#a5a5a5]">
                    <TabCalendar className="h-[15px] w-[15px]" />
                    <span className="mt-[2px] text-[#bbb]">Calendar</span>
                  </div>
                  <div className="flex flex-col items-center text-[#a5a5a5]">
                    <FaCog className="h-[15px] w-[15px]" />
                    <span className="mt-[2px] text-[#bbb]">Setting</span>
                  </div>
                  <span className="absolute bottom-[4px] left-[84px] h-[3px] w-[93px] rounded-full bg-black" />
                </div>
              </div>
            </div>
          </div>
        </div>
      </div>
    </div>
  );
}

export default function App() {
  return (
    <div className="relative h-[1600px] w-[2560px] overflow-hidden bg-[#333333] font-[Inter,'Noto_Sans_CJK_KR',sans-serif] tracking-[-0.02em]">
      <h1 className="absolute top-[186px] left-[110px] text-[55.5px] leading-[54px] font-thin tracking-[0.2px] text-[#ececec]">
        Sync your notes
        <br />
        with iCloud.
      </h1>
      <MacBook />
      <Ipad />
      <IPhone />
    </div>
  );
}
